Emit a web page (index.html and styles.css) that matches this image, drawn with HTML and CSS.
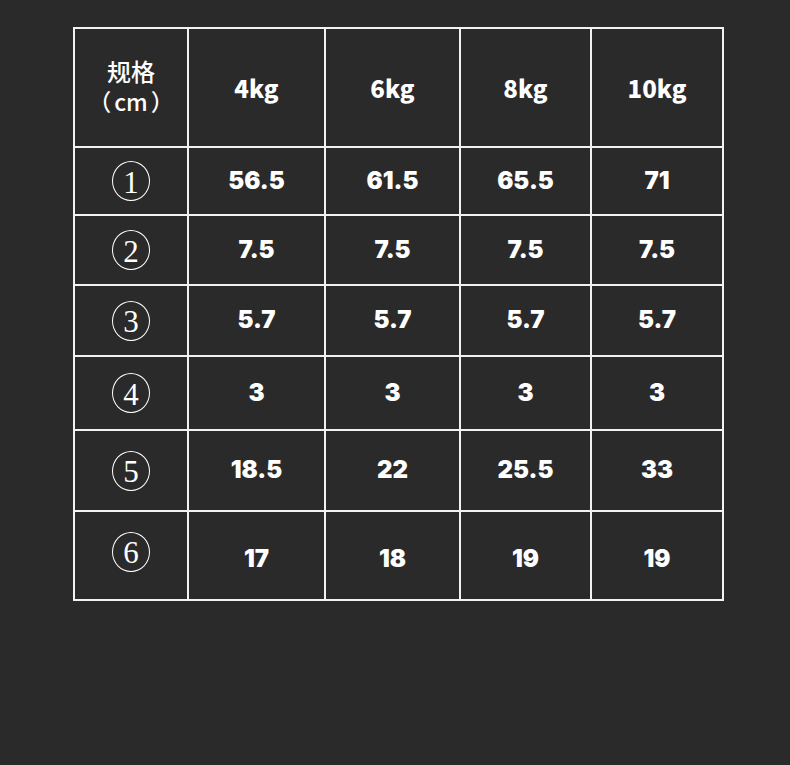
FILE: index.html
```html
<!DOCTYPE html>
<html lang="zh">
<head>
<meta charset="utf-8">
<link rel="stylesheet" href="styles.css">
</head>
<body>
<div class="page">
  <div class="grid">
    <div class="cell head spec"><span class="l1">规格</span><span class="l2"><span class="po">（</span>cm<span class="pc">）</span></span></div>
    <div class="cell head">4kg</div>
    <div class="cell head">6kg</div>
    <div class="cell head">8kg</div>
    <div class="cell head">10kg</div>

    <div class="cell"><span class="circ">1</span></div>
    <div class="cell num">56.5</div>
    <div class="cell num">61.5</div>
    <div class="cell num">65.5</div>
    <div class="cell num">71</div>

    <div class="cell"><span class="circ">2</span></div>
    <div class="cell num">7.5</div>
    <div class="cell num">7.5</div>
    <div class="cell num">7.5</div>
    <div class="cell num">7.5</div>

    <div class="cell"><span class="circ">3</span></div>
    <div class="cell num">5.7</div>
    <div class="cell num">5.7</div>
    <div class="cell num">5.7</div>
    <div class="cell num">5.7</div>

    <div class="cell"><span class="circ">4</span></div>
    <div class="cell num">3</div>
    <div class="cell num">3</div>
    <div class="cell num">3</div>
    <div class="cell num">3</div>

    <div class="cell"><span class="circ">5</span></div>
    <div class="cell num">18.5</div>
    <div class="cell num">22</div>
    <div class="cell num">25.5</div>
    <div class="cell num">33</div>

    <div class="cell"><span class="circ up">6</span></div>
    <div class="cell num down">17</div>
    <div class="cell num down">18</div>
    <div class="cell num down">19</div>
    <div class="cell num down">19</div>
  </div>
</div>
</body>
</html>
```

FILE: styles.css
```css
html, body {
  margin: 0;
  padding: 0;
  background: #2a2a2a;
}
.page {
  width: 790px;
  height: 765px;
  padding: 27px 0 0 73px;
  box-sizing: border-box;
}
.grid {
  display: grid;
  grid-template-columns: 112px 135px 133px 129px 130px;
  grid-template-rows: 117px 66px 68px 69px 72px 79px 87px;
  gap: 2px;
  padding: 2px;
  background: #f2f2f2;
  width: max-content;
}
.cell {
  background: #2a2a2a;
  color: #fff;
  display: flex;
  align-items: center;
  justify-content: center;
}
.head {
  font-family: "Noto Sans CJK SC", sans-serif;
  font-weight: 900;
  font-size: 24px;
}
.spec {
  flex-direction: column;
  font-weight: 500;
  font-size: 23px;
  line-height: 30px;
  padding-bottom: 4px;
  box-sizing: border-box;
}
.l1, .l2 {
  display: block;
  white-space: nowrap;
}
.l1 {
  font-size: 24px;
}
.po {
  margin-right: 3px;
}
.pc {
  margin-left: 3px;
}
.num {
  font-family: Inter, "Noto Sans", sans-serif;
  font-weight: 900;
  font-size: 24px;
  padding-bottom: 2px;
}
.down {
  padding-top: 6px;
  padding-bottom: 0;
}
.circ {
  width: 36px;
  height: 36px;
  border: 1.5px solid #fff;
  border-radius: 50%;
  display: flex;
  align-items: center;
  justify-content: center;
  font-family: "Liberation Serif", serif;
  font-size: 31px;
  line-height: 1;
  padding-top: 2px;
  box-sizing: content-box;
}
.up {
  margin-bottom: 8px;
}
```
